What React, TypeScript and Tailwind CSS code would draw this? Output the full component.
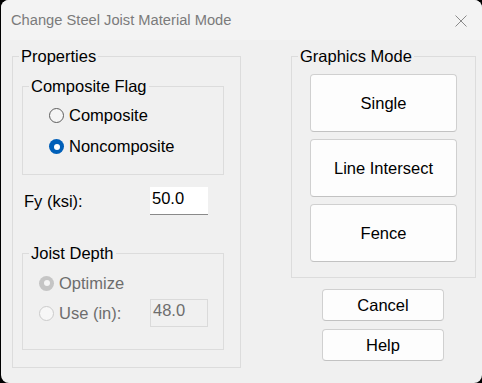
import React from "react";

function Radio({ checked, disabled }: { checked: boolean; disabled?: boolean }) {
  if (checked && !disabled) {
    return (
      <span className="w-[15px] h-[15px] rounded-full bg-[#005fb8] flex items-center justify-center shrink-0">
        <span className="w-[6px] h-[6px] rounded-full bg-white" />
      </span>
    );
  }
  if (checked && disabled) {
    return (
      <span className="w-[15px] h-[15px] rounded-full bg-[#c5c5c5] flex items-center justify-center shrink-0">
        <span className="w-[6px] h-[6px] rounded-full bg-[#f5f5f5]" />
      </span>
    );
  }
  if (disabled) {
    return <span className="w-[15px] h-[15px] rounded-full border border-[#cbcbcb] bg-[#f7f7f7] shrink-0" />;
  }
  return <span className="w-[15px] h-[15px] rounded-full border border-[#5d5d5d] bg-[#f5f5f5] shrink-0" />;
}

function Btn({ label, h }: { label: string; h: string }) {
  return (
    <button
      className={
        "w-full rounded-[4px] border border-[#d0d0d0] border-b-[#c2c2c2] bg-[#fdfdfd] text-black flex items-center justify-center " +
        h
      }
    >
      {label}
    </button>
  );
}

export default function App() {
  return (
    <div className="w-[482px] h-[383px] bg-black flex font-['Liberation_Sans',Arial,sans-serif] text-[16.5px] leading-[19px] text-black">
      <div className="ml-[1px] w-[481px] h-[383px] rounded-[8px] bg-[#f0f0f0] overflow-hidden flex flex-col">
        {/* Title bar */}
        <div className="h-[40px] bg-[#f3f3f3] flex items-center justify-between pl-[10px] pr-[15px]">
          <span className="font-['Liberation_Sans',Arial,sans-serif] text-[14.7px] text-[#7b7b7b] leading-[20px]">
            Change Steel Joist Material Mode
          </span>
          <svg width="12" height="12" viewBox="0 0 12 12" className="mt-[1px]">
            <path d="M0.5 0.5 L11.5 11.5 M11.5 0.5 L0.5 11.5" stroke="#8a8a8a" strokeWidth="1" fill="none" />
          </svg>
        </div>

        {/* Body */}
        <div className="flex items-start pt-[7px] pl-[11px]">
          {/* Properties */}
          <fieldset className="w-[229px] border border-[#dcdcdc] pl-[6px] pr-0 pb-[17px]">
            <legend className="px-[2px] leading-[19px]">Properties</legend>

            <fieldset className="ml-[3px] mt-[11px] w-[202px] border border-[#dcdcdc] pl-[6px] pb-[12px]">
              <legend className="px-[2px] leading-[19px]">Composite Flag</legend>
              <div className="mt-[4px] ml-[20px] flex flex-col">
                <div className="h-[31px] flex items-center gap-[5px]">
                  <Radio checked={false} />
                  <span>Composite</span>
                </div>
                <div className="h-[31px] flex items-center gap-[5px]">
                  <Radio checked={true} />
                  <span>Noncomposite</span>
                </div>
              </div>
            </fieldset>

            <div className="mt-[12px] ml-[5px] flex items-center h-[28px]">
              <span className="w-[126px]">Fy (ksi):</span>
              <div className="w-[58px] h-[28px] bg-white border-b border-[#8a8a8a] pl-[2px] pt-[2px]">50.0</div>
            </div>

            <fieldset className="ml-[3px] mt-[29px] w-[202px] border border-[#dcdcdc] pl-[6px] pb-[21px]">
              <legend className="px-[2px] leading-[19px]">Joist Depth</legend>
              <div className="mt-[5px] ml-[10px] flex flex-col text-[#6d6d6d]">
                <div className="h-[30px] flex items-center gap-[5px]">
                  <Radio checked={true} disabled />
                  <span>Optimize</span>
                </div>
                <div className="h-[30px] flex items-center">
                  <div className="w-[111px] flex items-center gap-[5px]">
                    <Radio checked={false} disabled />
                    <span>Use (in):</span>
                  </div>
                  <div className="w-[58px] h-[28px] border border-[#dadada] bg-[#f0f0f0] pl-[2px] pt-[1px]">48.0</div>
                </div>
              </div>
            </fieldset>
          </fieldset>

          {/* Right column */}
          <div className="ml-[50px] w-[185px] flex flex-col">
            <fieldset className="w-[185px] border border-[#dcdcdc] pl-[6px] pb-[15px]">
              <legend className="px-[2px] leading-[19px]">Graphics Mode</legend>
              <div className="mt-[8px] ml-[12px] w-[147px] flex flex-col gap-[7px]">
                <Btn label="Single" h="h-[58px]" />
                <Btn label="Line Intersect" h="h-[58px]" />
                <Btn label="Fence" h="h-[58px]" />
              </div>
            </fieldset>
            <div className="mt-[11px] ml-[31px] w-[122px] flex flex-col gap-[8px]">
              <Btn label="Cancel" h="h-[32px]" />
              <Btn label="Help" h="h-[32px]" />
            </div>
          </div>
        </div>
      </div>
    </div>
  );
}
